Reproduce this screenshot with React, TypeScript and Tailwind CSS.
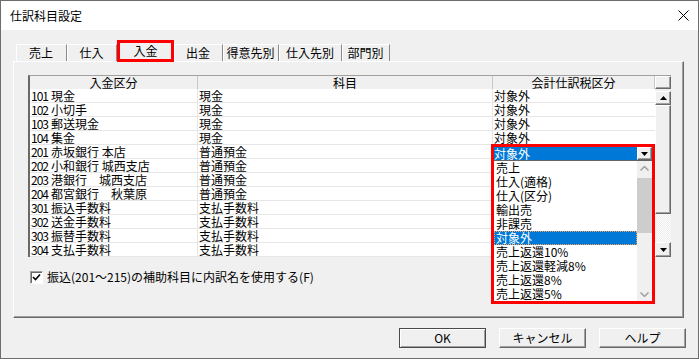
import React from 'react';

const raised =
  'border border-t-white border-l-white border-r-[#696969] border-b-[#696969] shadow-[inset_-1px_-1px_0_#a0a0a0]';

const tabs = [
  { label: '売上', w: 'w-[51px]' },
  { label: '仕入', w: 'w-[50px]' },
  { label: '入金', w: 'w-[57px]', active: true },
  { label: '出金', w: 'w-[49px]' },
  { label: '得意先別', w: 'w-[56px]' },
  { label: '仕入先別', w: 'w-[63px]' },
  { label: '部門別', w: 'w-[48px]' },
];

// the tax column of rows 201 and below sits under the open dropdown
const rows = [
  ['101', '現金', '現金', '対象外'],
  ['102', '小切手', '現金', '対象外'],
  ['103', '郵送現金', '現金', '対象外'],
  ['104', '集金', '現金', '対象外'],
  ['201', '赤坂銀行 本店', '普通預金', ''],
  ['202', '小和銀行 城西支店', '普通預金', ''],
  ['203', '港銀行　城西支店', '普通預金', ''],
  ['204', '都宮銀行　秋葉原', '普通預金', ''],
  ['301', '振込手数料', '支払手数料', ''],
  ['302', '送金手数料', '支払手数料', ''],
  ['303', '振替手数料', '支払手数料', ''],
  ['304', '支払手数料', '支払手数料', ''],
];

const taxItems = [
  '売上',
  '仕入(適格)',
  '仕入(区分)',
  '輸出売',
  '非課売',
  '対象外',
  '売上返還10%',
  '売上返還軽減8%',
  '売上返還8%',
  '売上返還5%',
];

function Tri({ down }: { down?: boolean }) {
  return (
    <svg width="7" height="4" viewBox="0 0 7 4">
      {down ? <path d="M0 0H7L3.5 4Z" fill="#000" /> : <path d="M0 4H7L3.5 0Z" fill="#000" />}
    </svg>
  );
}

function Chevron({ down }: { down?: boolean }) {
  return (
    <svg width="9" height="5" viewBox="0 0 9 5">
      <polyline
        points={down ? '0.5,0.5 4.5,4.5 8.5,0.5' : '0.5,4.5 4.5,0.5 8.5,4.5'}
        fill="none"
        stroke="#a0a0a0"
        strokeWidth="1.5"
      />
    </svg>
  );
}

function TaxDropdown() {
  return (
    <div className="absolute left-[461px] top-[68px] z-10 flex h-[160px] w-[164px] flex-col border-[3px] border-[#ff0000] bg-white">
      <div className="flex h-[13px]">
        <div className="flex-1 bg-[#0078d7] leading-[13px] text-white">対象外</div>
        <div className={`${raised} flex w-[15px] items-center justify-center bg-[#f0f0f0]`}>
          <Tri down />
        </div>
      </div>
      <div className="h-px bg-[#646464]" />
      <div className="flex flex-1">
        <div className="w-[143px]">
          {taxItems.map((t) => (
            <div
              key={t}
              className={
                t === '対象外'
                  ? 'h-[14px] pl-[2px] bg-[#0078d7] text-white outline-1 outline-dotted outline-[#f4a460] -outline-offset-1'
                  : 'h-[14px] pl-[2px]'
              }
            >
              {t}
            </div>
          ))}
        </div>
        <div className="flex w-[15px] flex-col bg-[#f0f0f0]">
          <div className="flex h-[14px] items-center justify-center">
            <Chevron />
          </div>
          <div className="mt-[3px] h-[55px] bg-[#cdcdcd]" />
          <div className="flex-1" />
          <div className="flex h-[14px] items-center justify-center">
            <Chevron down />
          </div>
        </div>
      </div>
    </div>
  );
}

function Grid() {
  return (
    <div className="relative ml-[14px] mt-[13px] flex w-[643px] border-l-2 border-t border-l-[#696969] border-t-[#a0a0a0]">
      <div className="w-[625px] bg-white">
        <div className="flex h-[13px] bg-[#f0f0f0] leading-[13px]">
          <div className="w-[168px] border-r border-r-[#c8c8c8] text-center">入金区分</div>
          <div className="w-[295px] border-r border-r-[#c8c8c8] text-center">科目</div>
          <div className="w-[162px] border-r border-r-[#c8c8c8] text-center">会計仕訳税区分</div>
        </div>
        {rows.map(([code, name, acct, tax]) => (
          <div key={code} className="flex h-[14px] border-b border-b-[#e6e6e6] leading-[13px]">
            <div className="flex w-[168px] border-r border-r-[#e6e6e6] pl-px">
              <span className="w-[20px] shrink-0 tracking-[-1px]">{code}</span>
              <span>{name}</span>
            </div>
            <div className="w-[295px] border-r border-r-[#e6e6e6] pl-px">{acct}</div>
            <div className="w-[162px] pl-px">{tax}</div>
          </div>
        ))}
      </div>
      <div className="flex w-[16px] flex-col bg-[#f0f0f0]">
        <div className={`${raised} h-[13px]`} />
        <div className={`${raised} mt-[2px] flex h-[14px] items-center justify-center`}>
          <Tri />
        </div>
        <div className={`${raised} h-[109px]`} />
        <div className="h-[28px] bg-[image:repeating-conic-gradient(#ffffff_0%_25%,#ececec_0%_50%)] bg-[length:2px_2px]" />
        <div className={`${raised} flex h-[15px] items-center justify-center`}>
          <Tri down />
        </div>
      </div>
      <TaxDropdown />
    </div>
  );
}

export default function App() {
  return (
    <div className="flex h-[359px] w-[699px] flex-col overflow-hidden border border-[#6d6d6d] bg-[#f0f0f0] font-['Noto_Sans_CJK_JP',sans-serif] text-[12px] leading-[14px] text-black">
      {/* title bar */}
      <div className="flex h-[29px] items-center justify-between bg-white pl-[9px] pr-[9px]">
        <span>仕訳科目設定</span>
        <svg width="11" height="11" viewBox="0 0 11 11">
          <path d="M0.5 0.5L10.5 10.5M10.5 0.5L0.5 10.5" stroke="#000" strokeWidth="1" />
        </svg>
      </div>

      <div className="flex-1 pt-[10px]">
        {/* tabs */}
        <div className="relative z-10 ml-[15px] flex h-[22px]">
          {tabs.map((t) =>
            t.active ? (
              <div
                key={t.label}
                className={`${t.w} flex h-[22px] items-center justify-center border-[3px] border-[#ff0000] bg-[#f0f0f0]`}
              >
                {t.label}
              </div>
            ) : (
              <div
                key={t.label}
                className={`${t.w} mt-[4px] flex h-[17px] items-center justify-center border-r border-t border-r-[#8a8a8a] border-t-white shadow-[inset_1px_0_0_#ffffff]`}
              >
                {t.label}
              </div>
            )
          )}
        </div>

        {/* panel */}
        <div className="relative -mt-px ml-[12px] h-[257px] w-[671px] border border-t-white border-l-white border-r-[#696969] border-b-[#696969] shadow-[inset_-1px_-1px_0_#a0a0a0]">
          <Grid />
          <div className="ml-[16px] mt-[13px] flex items-center gap-[4px]">
            <div className="flex h-[13px] w-[13px] items-center justify-center border border-t-[#a0a0a0] border-l-[#a0a0a0] border-r-white border-b-white bg-white shadow-[inset_1px_1px_0_#696969]">
              <svg width="9" height="9" viewBox="0 0 9 9">
                <polyline points="1,4 3.5,6.5 8,1.5" fill="none" stroke="#000" strokeWidth="1.6" />
              </svg>
            </div>
            <span>振込(201〜215)の補助科目に内訳名を使用する(F)</span>
          </div>
        </div>

        {/* buttons */}
        <div className="mt-[10px] flex justify-end gap-[13px] pr-[12px]">
          <button className="flex h-[20px] w-[87px] items-center justify-center border border-[#4a4a4a] bg-[#f0f0f0] shadow-[inset_1px_1px_0_#ffffff,inset_-1px_-1px_0_#a0a0a0]">
            OK
          </button>
          <button className={`${raised} flex h-[20px] w-[87px] items-center justify-center bg-[#f0f0f0]`}>
            キャンセル
          </button>
          <button className={`${raised} flex h-[20px] w-[87px] items-center justify-center bg-[#f0f0f0]`}>
            ヘルプ
          </button>
        </div>
      </div>
    </div>
  );
}
